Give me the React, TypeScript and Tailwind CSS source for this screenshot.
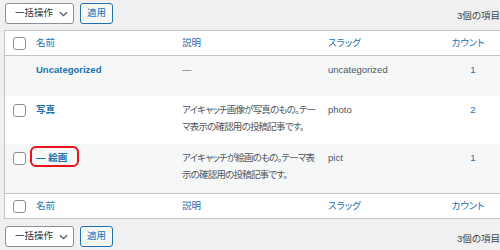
const font = "font-['Liberation_Sans','Noto_Sans_CJK_JP',sans-serif] [font-feature-settings:'palt']";

type Row = {
  name: string;
  prefix?: string;
  desc: string[];
  slug: string;
  count: number;
  height: string;
  striped: boolean;
  marked?: boolean;
};

const rows: Row[] = [
  { name: "Uncategorized", desc: ["—"], slug: "uncategorized", count: 1, height: "h-[40px]", striped: true },
  {
    name: "写真",
    desc: ["アイキャッチ画像が写真のもの。テー", "マ表示の確認用の投稿記事です。"],
    slug: "photo",
    count: 2,
    height: "h-[48px]",
    striped: false,
  },
  {
    name: "絵画",
    prefix: "— ",
    desc: ["アイキャッチが絵画のもの。テーマ表", "示の確認用の投稿記事です。"],
    slug: "pict",
    count: 1,
    height: "h-[49px]",
    striped: true,
    marked: true,
  },
];

function Checkbox({ className = "" }: { className?: string }) {
  return <span className={`block h-[13px] w-[13px] rounded-[3px] border border-[#8c8f94] bg-white ${className}`} />;
}

function BulkActions() {
  return (
    <div className="flex items-start gap-[6px]">
      <div className="flex h-[21px] w-[69px] items-center justify-between rounded-[3px] border border-[#8c8f94] bg-white pl-[9px] pr-[5px] text-[9.5px] text-[#2c3338]">
        <span>一括操作</span>
        <svg width="9" height="6" viewBox="0 0 9 6" fill="none">
          <path d="M1 1.2L4.5 4.6L8 1.2" stroke="#50575e" strokeWidth="1.3" />
        </svg>
      </div>
      <button className="flex h-[21px] w-[33px] items-center justify-center rounded-[3px] border border-[#2271b1] bg-[#f6f7f7] text-[9.5px] text-[#2271b1]">
        適用
      </button>
    </div>
  );
}

function Toolbar({ className = "" }: { className?: string }) {
  return (
    <div className={`flex items-start justify-between pl-[5px] ${className}`}>
      <BulkActions />
      <span className="mt-[4px] text-[9.5px] leading-[17px] text-[#3c434a]">3個の項目</span>
    </div>
  );
}

function HeaderRow({ border }: { border: string }) {
  return (
    <div className={`grid h-[25px] grid-cols-[23px_146px_146px_116px_1fr] items-center bg-white text-[9.5px] text-[#2271b1] ${border}`}>
      <div className="pl-[8px]">
        <Checkbox className="mt-[1px]" />
      </div>
      <span className="pl-[8px]">名前</span>
      <span className="pl-[8px]">説明</span>
      <span className="pl-[8px]">スラッグ</span>
      <span className="flex justify-center">
        <span>カウント</span>
        <span className="w-[10px]" />
      </span>
    </div>
  );
}

export default function App() {
  return (
    <div className={`h-[250px] w-[500px] overflow-hidden bg-[#f0f0f1] ${font}`}>
      <Toolbar className="h-[30px] pt-[3px]" />

      <div className="ml-[4px] w-[507px] border border-[#c3c4c7] bg-white">
        <HeaderRow border="border-b border-[#c3c4c7]" />

        {rows.map((row) => (
          <div
            key={row.slug}
            className={`grid grid-cols-[23px_146px_146px_116px_1fr] items-start pt-[5px] text-[9.5px] leading-[17px] ${row.height} ${
              row.striped ? "bg-[#f6f7f7]" : "bg-white"
            }`}
          >
            <div className="pl-[8px]">{row.name !== "Uncategorized" && <Checkbox className="mt-[3px]" />}</div>
            <div className="pl-[8px]">
              <span className="relative inline-block font-bold text-[#2271b1]">
                {row.prefix}
                {row.name}
                {row.marked && (
                  <span className="absolute -bottom-[1px] -left-[6px] -right-[12px] -top-[3px] rounded-[6px] border-2 border-[#e8101a]" />
                )}
              </span>
            </div>
            <div className="pl-[8px] tracking-[-0.8px] text-[#50575e]">
              {row.desc.map((line) => (
                <div key={line} className="whitespace-nowrap">
                  {line}
                </div>
              ))}
            </div>
            <div className="pl-[8px] text-[#50575e]">{row.slug}</div>
            <div className="text-center text-[#2271b1]">{row.count}</div>
          </div>
        ))}

        <HeaderRow border="border-t border-[#c3c4c7]" />
      </div>

      <Toolbar className="pt-[7px]" />
    </div>
  );
}
